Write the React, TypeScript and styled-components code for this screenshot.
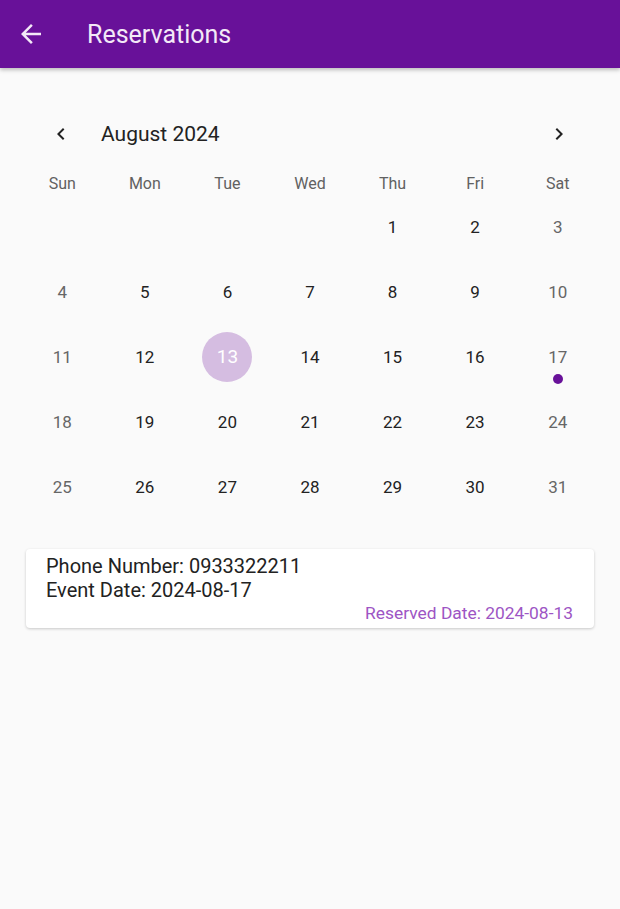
import React from "react";
import styled, { createGlobalStyle } from "styled-components";

const GlobalStyle = createGlobalStyle`
  html, body {
    margin: 0;
    padding: 0;
    background: #fafafa;
    font-family: Roboto, "Noto Sans", sans-serif;
  }
`;

const weekDays = ["Sun", "Mon", "Tue", "Wed", "Thu", "Fri", "Sat"];

// August 2024 starts on a Thursday
const buildWeeks = () => {
  const cells: (number | null)[] = [null, null, null, null];
  for (let d = 1; d <= 31; d++) cells.push(d);
  const weeks: (number | null)[][] = [];
  for (let i = 0; i < cells.length; i += 7) {
    const w = cells.slice(i, i + 7);
    while (w.length < 7) w.push(null);
    weeks.push(w);
  }
  return weeks;
};

const ArrowBack = () => (
  <svg width="30" height="30" viewBox="0 0 24 24">
    <path
      fill="currentColor"
      d="M20 11H7.83l5.59-5.59L12 4l-8 8 8 8 1.41-1.41L7.83 13H20v-2z"
    />
  </svg>
);

const ChevronLeft = () => (
  <svg width="24" height="24" viewBox="0 0 24 24">
    <path fill="currentColor" d="M15.41 7.41L14 6l-6 6 6 6 1.41-1.41L10.83 12z" />
  </svg>
);

const ChevronRight = () => (
  <svg width="24" height="24" viewBox="0 0 24 24">
    <path fill="currentColor" d="M10 6L8.59 7.41 13.17 12l-4.58 4.59L10 18l6-6z" />
  </svg>
);

export default function App() {
  const weeks = buildWeeks();
  return (
    <>
      <GlobalStyle />
      <Page>
        <AppBar>
          <BackButton>
            <ArrowBack />
          </BackButton>
          <Title>Reservations</Title>
        </AppBar>

        <Calendar>
          <Header>
            <NavButton>
              <ChevronLeft />
            </NavButton>
            <MonthTitle>August 2024</MonthTitle>
            <NavButton>
              <ChevronRight />
            </NavButton>
          </Header>

          <Grid>
            {weekDays.map((d) => (
              <WeekDay key={d}>{d}</WeekDay>
            ))}
            {weeks.map((w, wi) =>
              w.map((day, i) => (
                <DayCell key={`${wi}-${i}`}>
                  {day !== null && (
                    <>
                      <DayNumber
                        weekend={i === 0 || i === 6}
                        selected={day === 13}
                      >
                        {day}
                      </DayNumber>
                      {day === 17 && <Marker />}
                    </>
                  )}
                </DayCell>
              ))
            )}
          </Grid>
        </Calendar>

        <Card>
          <CardLine>Phone Number: 0933322211</CardLine>
          <CardLine>Event Date: 2024-08-17</CardLine>
          <Reserved>Reserved Date: 2024-08-13</Reserved>
        </Card>
      </Page>
    </>
  );
}

const Page = styled.div`
  width: 620px;
  min-height: 909px;
  background: #fafafa;
`;

const AppBar = styled.div`
  height: 68px;
  background: #681199;
  display: flex;
  align-items: center;
  box-shadow: 0 2px 4px rgba(0, 0, 0, 0.25);
  position: relative;
`;

const BackButton = styled.div`
  width: 30px;
  height: 30px;
  margin-left: 16px;
  color: #f3e9f7;
  display: flex;
`;

const Title = styled.div`
  margin-left: 41px;
  font-size: 25px;
  color: #f3e9f7;
`;

const Calendar = styled.div`
  padding: 38px 21px 0;
`;

const Header = styled.div`
  height: 56px;
  display: flex;
  align-items: center;
`;

const NavButton = styled.div`
  width: 24px;
  height: 24px;
  color: #222;
  display: flex;
  margin-left: 28px;
  &:last-child {
    margin-left: auto;
    margin-right: 28px;
  }
`;

const MonthTitle = styled.div`
  margin-left: 28px;
  font-size: 21px;
  color: #222;
`;

const Grid = styled.div`
  display: grid;
  grid-template-columns: repeat(7, 1fr);
  grid-template-rows: 22px repeat(5, 65px);
  margin-top: 10px;
`;

const WeekDay = styled.div`
  display: flex;
  align-items: center;
  justify-content: center;
  font-size: 16px;
  color: #616161;
`;

const DayCell = styled.div`
  position: relative;
  display: flex;
  align-items: center;
  justify-content: center;
`;

const DayNumber = styled.div<{ weekend?: boolean; selected?: boolean }>`
  width: 50px;
  height: 50px;
  border-radius: 50%;
  display: flex;
  align-items: center;
  justify-content: center;
  font-size: ${(p) => (p.selected ? "19px" : "17px")};
  color: ${(p) => (p.selected ? "#ffffff" : p.weekend ? "#666" : "#222")};
  background: ${(p) => (p.selected ? "#d5bde1" : "transparent")};
`;

const Marker = styled.div`
  position: absolute;
  width: 10px;
  height: 10px;
  border-radius: 50%;
  background: #681199;
  left: 50%;
  top: 50%;
  transform: translate(-50%, 17px);
`;

const Card = styled.div`
  margin: 30px 26px 0;
  background: #fff;
  border-radius: 4px;
  box-shadow: 0 1px 3px rgba(0, 0, 0, 0.2);
  padding: 5px 21px 5px 20px;
  display: flex;
  flex-direction: column;
`;

const CardLine = styled.div`
  font-size: 20px;
  line-height: 24px;
  color: #222;
`;

const Reserved = styled.div`
  align-self: flex-end;
  font-size: 17.4px;
  line-height: 20px;
  color: #9d55c4;
  margin-top: 1px;
`;
